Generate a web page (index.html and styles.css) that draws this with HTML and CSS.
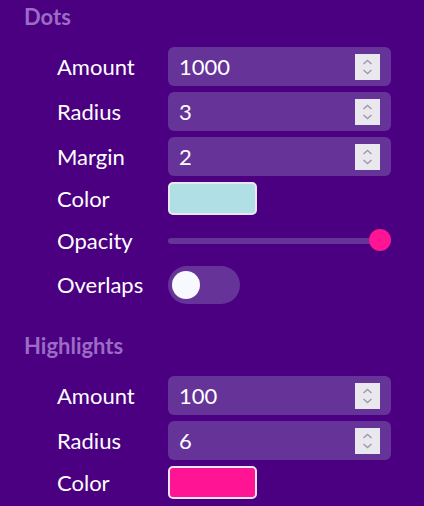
FILE: index.html
```html
<!DOCTYPE html>
<html>
<head>
<meta charset="utf-8">
<link rel="stylesheet" href="styles.css">
</head>
<body>
<section class="group">
  <h2 class="group-title">Dots</h2>
  <div class="rows">
    <label class="label">Amount</label>
    <div class="num"><span class="num-val">1000</span><span class="spin"><svg viewBox="0 0 25 26" width="25" height="26"><path d="M8.5 10 L12.5 6.5 L16.5 10 M8.5 16 L12.5 19.5 L16.5 16" fill="none" stroke="#9c9aa8" stroke-width="1.4"/></svg></span></div>
    <label class="label">Radius</label>
    <div class="num"><span class="num-val">3</span><span class="spin"><svg viewBox="0 0 25 26" width="25" height="26"><path d="M8.5 10 L12.5 6.5 L16.5 10 M8.5 16 L12.5 19.5 L16.5 16" fill="none" stroke="#9c9aa8" stroke-width="1.4"/></svg></span></div>
    <label class="label">Margin</label>
    <div class="num"><span class="num-val">2</span><span class="spin"><svg viewBox="0 0 25 26" width="25" height="26"><path d="M8.5 10 L12.5 6.5 L16.5 10 M8.5 16 L12.5 19.5 L16.5 16" fill="none" stroke="#9c9aa8" stroke-width="1.4"/></svg></span></div>
    <label class="label">Color</label>
    <div class="swatch swatch-blue"></div>
    <label class="label">Opacity</label>
    <div class="slider"><div class="track"></div><div class="thumb"></div></div>
    <label class="label">Overlaps</label>
    <div class="toggle-cell"><div class="toggle"><div class="knob"></div></div></div>
  </div>
</section>
<section class="group">
  <h2 class="group-title">Highlights</h2>
  <div class="rows">
    <label class="label">Amount</label>
    <div class="num"><span class="num-val">100</span><span class="spin"><svg viewBox="0 0 25 26" width="25" height="26"><path d="M8.5 10 L12.5 6.5 L16.5 10 M8.5 16 L12.5 19.5 L16.5 16" fill="none" stroke="#9c9aa8" stroke-width="1.4"/></svg></span></div>
    <label class="label">Radius</label>
    <div class="num"><span class="num-val">6</span><span class="spin"><svg viewBox="0 0 25 26" width="25" height="26"><path d="M8.5 10 L12.5 6.5 L16.5 10 M8.5 16 L12.5 19.5 L16.5 16" fill="none" stroke="#9c9aa8" stroke-width="1.4"/></svg></span></div>
    <label class="label">Color</label>
    <div class="swatch swatch-pink"></div>
  </div>
</section>
</body>
</html>
```
FILE: styles.css
```css
html, body {
  margin: 0;
  padding: 0;
  background: #4b0082;
  height: 100%;
  overflow: hidden;
}
body {
  font-family: Lato, "Noto Sans", sans-serif;
  color: #ffffff;
}
.group {
  padding: 0 0 0 24px;
}
.group + .group {
  margin-top: 25px;
}
.group-title {
  margin: 0;
  font-size: 22px;
  font-weight: 700;
  line-height: 34px;
  color: #9b6bc5;
}
.rows {
  margin-top: 13px;
  padding-left: 33px;
  display: grid;
  grid-template-columns: 111px 223px;
  row-gap: 6px;
  align-items: center;
}
.label {
  font-size: 22px;
  line-height: 26px;
}
.num {
  height: 39px;
  background: #663399;
  border-radius: 6px;
  display: flex;
  align-items: center;
  justify-content: space-between;
  padding: 0 11px 0 11px;
  box-sizing: border-box;
}
.num-val {
  font-size: 22px;
}
.spin {
  width: 25px;
  height: 26px;
  background: #e9e8ee;
  display: block;
}
.spin svg {
  display: block;
}
.swatch {
  width: 89px;
  height: 33px;
  box-sizing: border-box;
  border: 2px solid #ece6f4;
  border-radius: 5px;
}
.swatch-blue { background: #b0e0e6; }
.swatch-pink { background: #ff1493; }
.slider {
  height: 39px;
  position: relative;
  display: flex;
  align-items: center;
}
.track {
  width: 100%;
  height: 6px;
  background: #663399;
  border-radius: 3px;
}
.thumb {
  position: absolute;
  right: 0;
  top: 8px;
  width: 22px;
  height: 22px;
  border-radius: 50%;
  background: #ff1493;
}
.toggle {
  width: 72px;
  height: 38px;
  border-radius: 19px;
  background: #663399;
  display: flex;
  align-items: center;
  padding-left: 4px;
  box-sizing: border-box;
}
.knob {
  width: 28px;
  height: 28px;
  border-radius: 50%;
  background: #f8f8ff;
}
```
